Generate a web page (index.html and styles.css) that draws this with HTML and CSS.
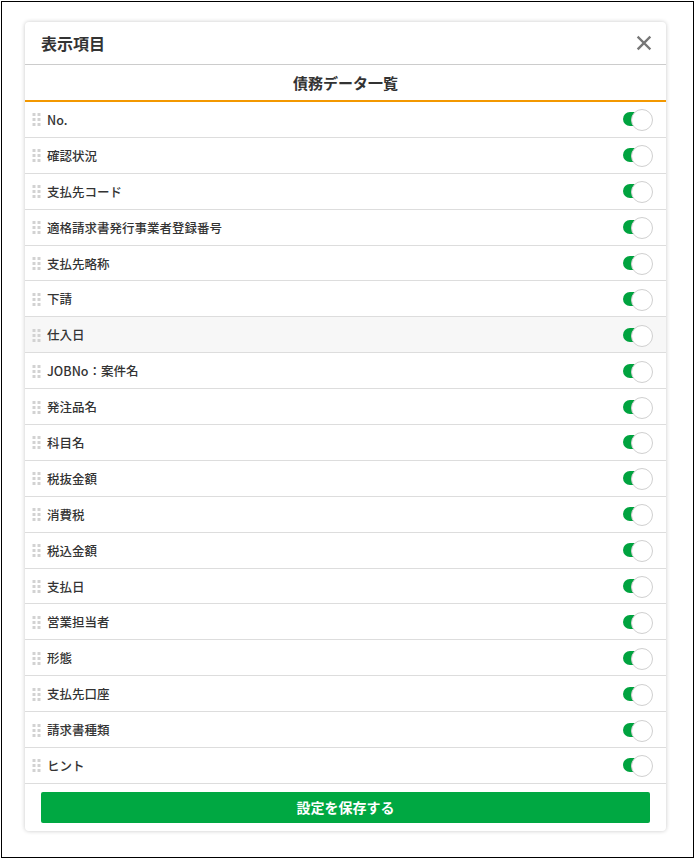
FILE: index.html
```html
<!DOCTYPE html>
<html lang="ja">
  <head>
    <meta charset="UTF-8" />
    <meta name="viewport" content="width=device-width, initial-scale=1.0" />
    <title>表示項目</title>
    <link rel="stylesheet" href="styles.css">
  </head>

  <body>
    <div class="frame">
      <div class="modal">
        <!-- ヘッダー -->
        <div class="modal-head">
          <h2 class="modal-title">表示項目</h2>
          <a href="JavaScript:;" class="close">
            <svg width="16" height="16" viewBox="0 0 16 16">
              <path d="M2.5 2.5 L13.5 13.5 M13.5 2.5 L2.5 13.5" stroke="#777" stroke-width="2.4" stroke-linecap="square" />
            </svg>
          </a>
        </div>
        <div class="sub-title">債務データ一覧</div>

        <!-- 項目一覧 -->
        <ul class="item-list">
          <li><span class="handle"></span><span class="label">No.</span><span class="switch on"></span></li>
          <li><span class="handle"></span><span class="label">確認状況</span><span class="switch on"></span></li>
          <li><span class="handle"></span><span class="label">支払先コード</span><span class="switch on"></span></li>
          <li><span class="handle"></span><span class="label">適格請求書発行事業者登録番号</span><span class="switch on"></span></li>
          <li><span class="handle"></span><span class="label">支払先略称</span><span class="switch on"></span></li>
          <li><span class="handle"></span><span class="label">下請</span><span class="switch on"></span></li>
          <li class="hover"><span class="handle"></span><span class="label">仕入日</span><span class="switch on"></span></li>
          <li><span class="handle"></span><span class="label">JOBNo：案件名</span><span class="switch on"></span></li>
          <li><span class="handle"></span><span class="label">発注品名</span><span class="switch on"></span></li>
          <li><span class="handle"></span><span class="label">科目名</span><span class="switch on"></span></li>
          <li><span class="handle"></span><span class="label">税抜金額</span><span class="switch on"></span></li>
          <li><span class="handle"></span><span class="label">消費税</span><span class="switch on"></span></li>
          <li><span class="handle"></span><span class="label">税込金額</span><span class="switch on"></span></li>
          <li><span class="handle"></span><span class="label">支払日</span><span class="switch on"></span></li>
          <li><span class="handle"></span><span class="label">営業担当者</span><span class="switch on"></span></li>
          <li><span class="handle"></span><span class="label">形態</span><span class="switch on"></span></li>
          <li><span class="handle"></span><span class="label">支払先口座</span><span class="switch on"></span></li>
          <li><span class="handle"></span><span class="label">請求書種類</span><span class="switch on"></span></li>
          <li><span class="handle"></span><span class="label">ヒント</span><span class="switch on"></span></li>
        </ul>

        <!-- 保存ボタン -->
        <div class="modal-foot">
          <button class="btn-save">設定を保存する</button>
        </div>
      </div>
    </div>
  </body>
</html>
```

FILE: styles.css
```css
* {
  margin: 0;
  padding: 0;
  box-sizing: border-box;
}

ul {
  list-style: none;
}

body {
  font-family: "Noto Sans CJK JP", "Liberation Sans", sans-serif;
  color: #333;
  background-color: #fff;
}

.frame {
  width: 693px;
  height: 857px;
  margin: 1px 0 0 1px;
  border: 1px solid #000;
  padding: 20px 0 0 23px;
}

.modal {
  width: 641px;
  background-color: #fff;
  border-radius: 4px;
  box-shadow: 0 0 4px rgba(0, 0, 0, 0.22);
}

/* ヘッダー */
.modal-head {
  height: 43px;
  display: flex;
  align-items: center;
  justify-content: space-between;
  padding: 0 14px 0 16px;
  border-bottom: 1px solid #ccc;
}
.modal-title {
  font-size: 16px;
  font-weight: 700;
  color: #333;
}
.close {
  display: flex;
  width: 16px;
  height: 16px;
}

.sub-title {
  height: 37px;
  line-height: 35px;
  text-align: center;
  font-size: 15px;
  font-weight: 700;
  border-bottom: 2px solid #f39800;
}

/* 一覧 */
.item-list li {
  height: 35.9px;
  display: flex;
  align-items: center;
  padding: 0 13px 0 7px;
  border-bottom: 1px solid #ddd;
}
.item-list li.hover {
  background-color: #f7f7f7;
}

.handle {
  width: 9px;
  height: 14px;
  margin-right: 6px;
  background-image: radial-gradient(circle, #d2d2d2 1.6px, transparent 1.8px);
  background-size: 5px 5px;
  background-position: -0.5px 0;
}

.label {
  flex: 1;
  font-size: 12.5px;
  font-weight: 500;
  color: #333;
}

/* トグル */
.switch {
  position: relative;
  width: 30px;
  height: 20px;
}
.switch::before {
  content: "";
  position: absolute;
  left: 0;
  top: 3px;
  width: 24px;
  height: 14px;
  border-radius: 7px;
  background-color: #ccc;
}
.switch.on::before {
  background-color: #00a33f;
}
.switch::after {
  content: "";
  position: absolute;
  right: 0;
  top: 0;
  width: 20px;
  height: 20px;
  border-radius: 50%;
  background-color: #fff;
  border: 1px solid #d0d0d0;
}

/* フッター */
.modal-foot {
  padding: 8px 16px 8px;
}
.btn-save {
  display: block;
  width: 100%;
  height: 31px;
  border: none;
  border-radius: 2px;
  background-color: #00a842;
  color: #fff;
  font-family: inherit;
  font-size: 14px;
  font-weight: 700;
  cursor: pointer;
}
```
